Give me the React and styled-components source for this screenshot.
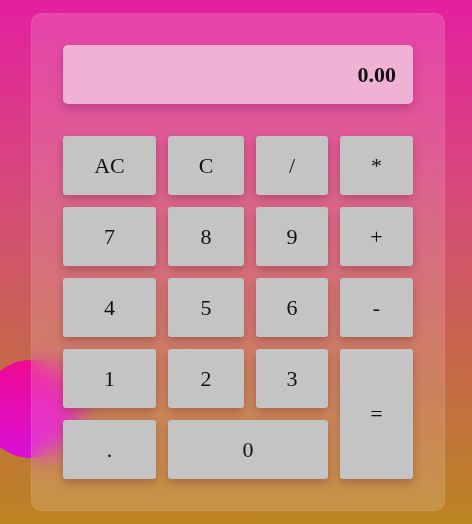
import React from "react";
import styled, { createGlobalStyle } from "styled-components";

const GlobalStyle = createGlobalStyle`
  html, body {
    margin: 0;
    padding: 0;
  }
  body {
    width: 472px;
    height: 524px;
    overflow: hidden;
    font-family: "Liberation Serif", "Times New Roman", serif;
  }
`;

const Page = styled.div`
  position: relative;
  width: 472px;
  height: 524px;
  box-sizing: border-box;
  padding: 13px 0 0 31px;
  background: linear-gradient(180deg, #e41f9f 0%, #d54d76 40%, #c8644f 65%, #bb8422 100%);
  overflow: hidden;
`;

const Blob = styled.div`
  position: absolute;
  left: -18px;
  top: 360px;
  width: 98px;
  height: 98px;
  border-radius: 50%;
  background: linear-gradient(180deg, #ee0b92 0%, #d910d6 100%);
`;

const Panel = styled.div`
  position: relative;
  width: 414px;
  height: 498px;
  box-sizing: border-box;
  padding: 31px;
  border-radius: 10px;
  background: rgba(255, 255, 255, 0.15);
  border: 1px solid rgba(255, 255, 255, 0.08);
  backdrop-filter: blur(12px);
  display: flex;
  flex-direction: column;
  gap: 32px;
`;

const Display = styled.div`
  flex: none;
  height: 59px;
  border-radius: 5px;
  background: #efb1d4;
  box-shadow: 0 4px 10px rgba(90, 0, 50, 0.25);
  display: flex;
  align-items: center;
  justify-content: flex-end;
  padding: 0 17px;
  font-size: 22px;
  font-weight: bold;
  color: #111;
`;

const Keys = styled.div`
  display: grid;
  grid-template-columns: 93px 76px 72px 73px;
  grid-auto-rows: 59px;
  gap: 12px;
`;

const Key = styled.button`
  border: none;
  border-radius: 3px;
  background: #c4c4c4;
  color: #111;
  font-family: "Liberation Serif", "Times New Roman", serif;
  font-size: 22px;
  box-shadow: 0 4px 10px rgba(60, 0, 20, 0.25);
  padding: 0;
  cursor: pointer;
  ${(p) => p.$wide && `grid-column: span 2;`}
  ${(p) => p.$tall && `grid-row: span 2;`}
`;

const Ghost = styled.span`
  position: absolute;
  left: 154px;
  top: 333px;
  font-family: "Liberation Sans", Arial, sans-serif;
  font-size: 11px;
  color: rgba(255, 255, 255, 0.06);
  pointer-events: none;
`;

export default function App() {
  return (
    <Page>
      <GlobalStyle />
      <Blob />
      <Panel>
        <Display>0.00</Display>
        <Keys>
          <Key>AC</Key>
          <Key>C</Key>
          <Key>/</Key>
          <Key>*</Key>
          <Key>7</Key>
          <Key>8</Key>
          <Key>9</Key>
          <Key>+</Key>
          <Key>4</Key>
          <Key>5</Key>
          <Key>6</Key>
          <Key>-</Key>
          <Key>1</Key>
          <Key>2</Key>
          <Key>3</Key>
          <Key $tall>=</Key>
          <Key>.</Key>
          <Key $wide>0</Key>
        </Keys>
        <Ghost>Rectangle 1.png</Ghost>
      </Panel>
    </Page>
  );
}
